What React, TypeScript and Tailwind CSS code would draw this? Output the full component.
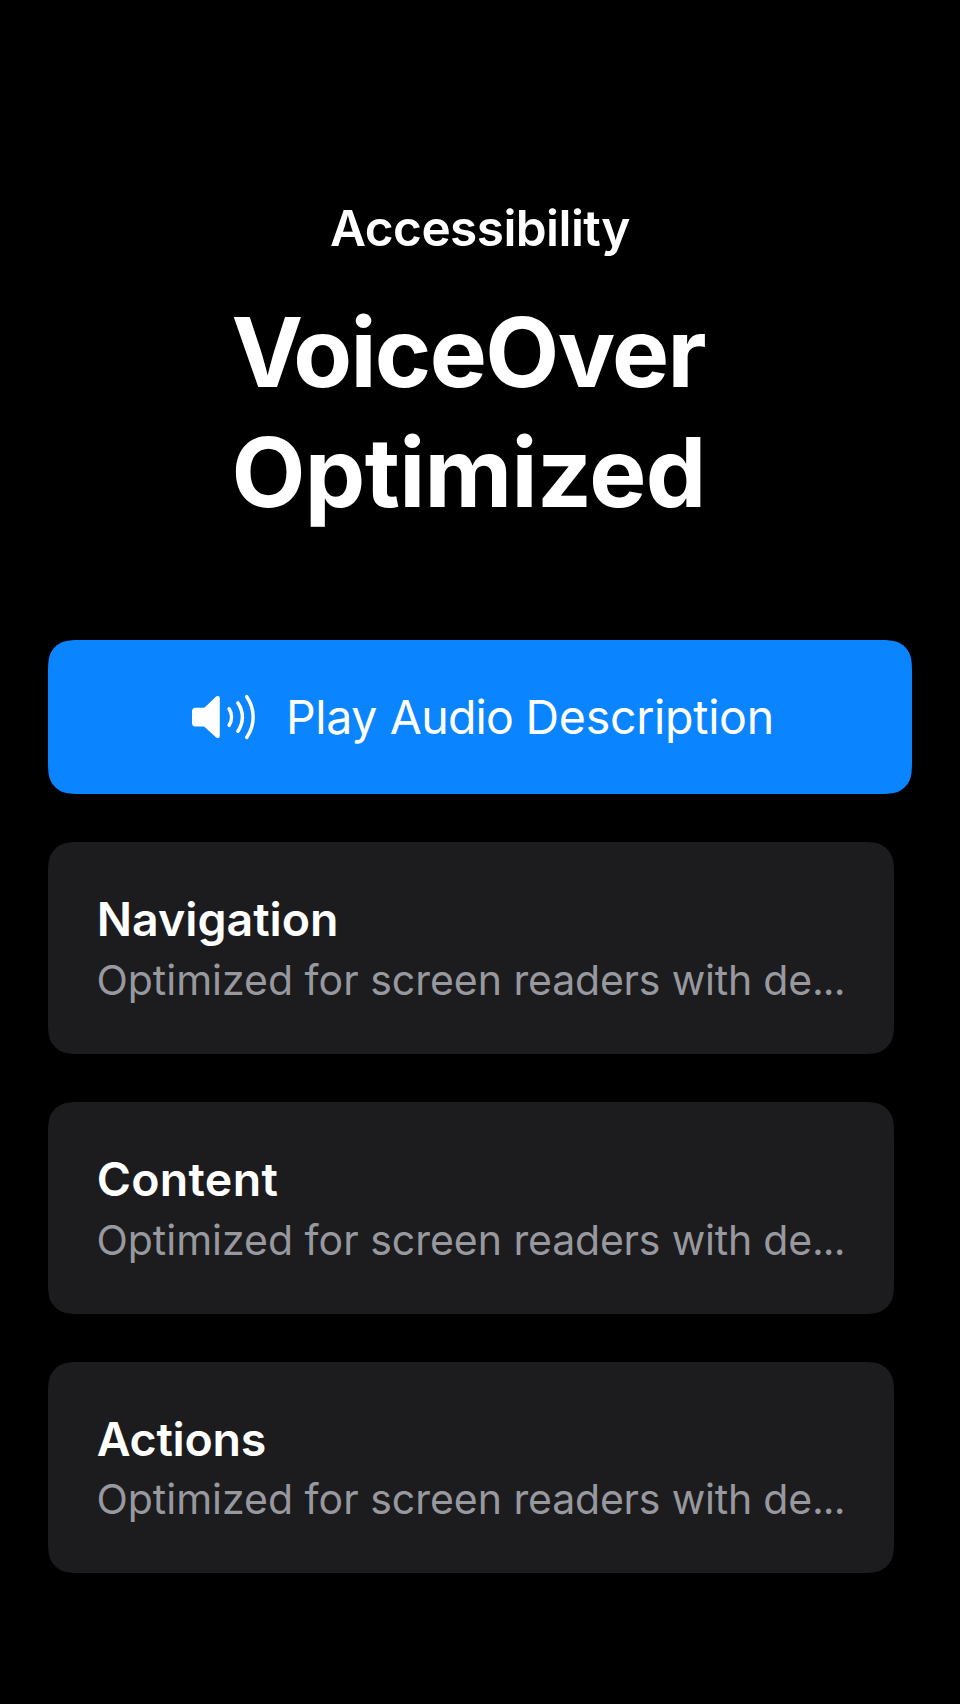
import type { ReactNode } from "react";

/** Outline of a rectangle with continuous (squircle-like) corners. */
function continuousRect(w: number, h: number, r: number): string {
  const a = 1.52866 * r;
  const b = 1.08849 * r;
  const c = 0.86841 * r;
  const d = 0.63149 * r;
  const e = 0.07491 * r;
  const f = 0.37282 * r;
  const g = 0.16906 * r;
  return [
    `M${a} 0L${w - a} 0`,
    `C${w - b} 0 ${w - c} 0 ${w - d} ${e}`,
    `C${w - f} ${g} ${w - g} ${f} ${w - e} ${d}`,
    `C${w} ${c} ${w} ${b} ${w} ${a}`,
    `L${w} ${h - a}`,
    `C${w} ${h - b} ${w} ${h - c} ${w - e} ${h - d}`,
    `C${w - g} ${h - f} ${w - f} ${h - g} ${w - d} ${h - e}`,
    `C${w - c} ${h} ${w - b} ${h} ${w - a} ${h}`,
    `L${a} ${h}`,
    `C${b} ${h} ${c} ${h} ${d} ${h - e}`,
    `C${f} ${h - g} ${g} ${h - f} ${e} ${h - d}`,
    `C0 ${h - c} 0 ${h - b} 0 ${h - a}`,
    `L0 ${a}`,
    `C0 ${b} 0 ${c} ${e} ${d}`,
    `C${g} ${f} ${f} ${g} ${d} ${e}`,
    `C${c} 0 ${b} 0 ${a} 0Z`,
  ].join("");
}

function clip(w: number, h: number) {
  return { width: w, height: h, clipPath: `path("${continuousRect(w, h, 24)}")` };
}

function SpeakerIcon() {
  return (
    <svg width="68" height="52" viewBox="0 -1 68 52" fill="none" aria-hidden="true" className="shrink-0">
      <path
        d="M5.6 15.7H13.2C14 15.7 14.6 15.4 15.2 14.9L25.6 5.1C26.4 4.4 27 4 27.8 4C29 4 29.8 4.9 29.8 6V43.9C29.8 45.1 29 46 27.8 46C27 46 26.3 45.6 25.6 44.9L15.2 35.4C14.6 34.9 14 34.6 13.2 34.6H5.6C3.2 34.6 2 33.4 2 31V19.3C2 16.9 3.2 15.7 5.6 15.7Z"
        fill="white"
      />
      <path
        d="M39.1 16.8C42.3 21.8 42.3 28.3 39.1 33.3M47.9 10.9C53.9 19.6 53.9 30.5 47.9 39.2M56.7 4.7C65.3 17 65.3 33.1 56.7 45.4"
        stroke="white"
        strokeWidth="3.5"
        strokeLinecap="round"
      />
    </svg>
  );
}

function FeatureCard({ title, height }: { title: ReactNode; height: number }) {
  return (
    <article className="bg-[#1c1c1e] pt-[45px] pl-12" style={clip(846, height)}>
      <h3 className="h-[64px] pl-[0.7px] text-[46.5px] leading-[64px] font-semibold whitespace-nowrap text-white">{title}</h3>
      <p
        className={
          height === 212
            ? "mt-[2px] pl-[0.4px] text-[41px] leading-[54px] whitespace-nowrap text-[#98989f]"
            : "mt-px pl-[0.4px] text-[41px] leading-[54px] whitespace-nowrap text-[#98989f]"
        }
      >
        Optimized for screen <span className="tracking-[-0.2px]">readers with de</span>
        <span className="tracking-[-0.9px]">...</span>
      </p>
    </article>
  );
}

export default function App() {
  return (
    <main className="flex h-[1704px] w-[960px] flex-col overflow-hidden bg-black px-12 pt-[198px] font-['Inter',sans-serif] text-white">
      <header className="flex h-[442px] flex-col items-center">
        <h2 className="h-[60px] text-[49.5px] leading-[60px] font-semibold tracking-[-0.55px] whitespace-nowrap">Accessibility</h2>
        <h1 className="mt-[34px] w-[497px] text-[96px] leading-[120px] font-bold">
          <span className="tracking-[-10px]">V</span>
          <span className="tracking-[-1.6px]">oiceOver</span>
          <br />
          <span className="tracking-[-0.65px]">Optimized</span>
        </h1>
      </header>
      <button type="button" className="flex shrink-0 items-center bg-[#0a84ff] pl-[142px]" style={clip(864, 154)}>
        <SpeakerIcon />
        <span className="ml-[28px] text-[46.5px] leading-[60px] tracking-[-0.36px] whitespace-nowrap">
          Play <span className="tracking-[-0.75px]">Audio </span>
          <span className="tracking-[-0.3px]">Description</span>
        </span>
      </button>
      <section className="mt-12 flex flex-col gap-12">
        <FeatureCard title="Navigation" height={212} />
        <FeatureCard title={<span className="tracking-[0.3px]">Content</span>} height={212} />
        <FeatureCard title={<span className="tracking-[-0.25px]">Actions</span>} height={211} />
      </section>
    </main>
  );
}
